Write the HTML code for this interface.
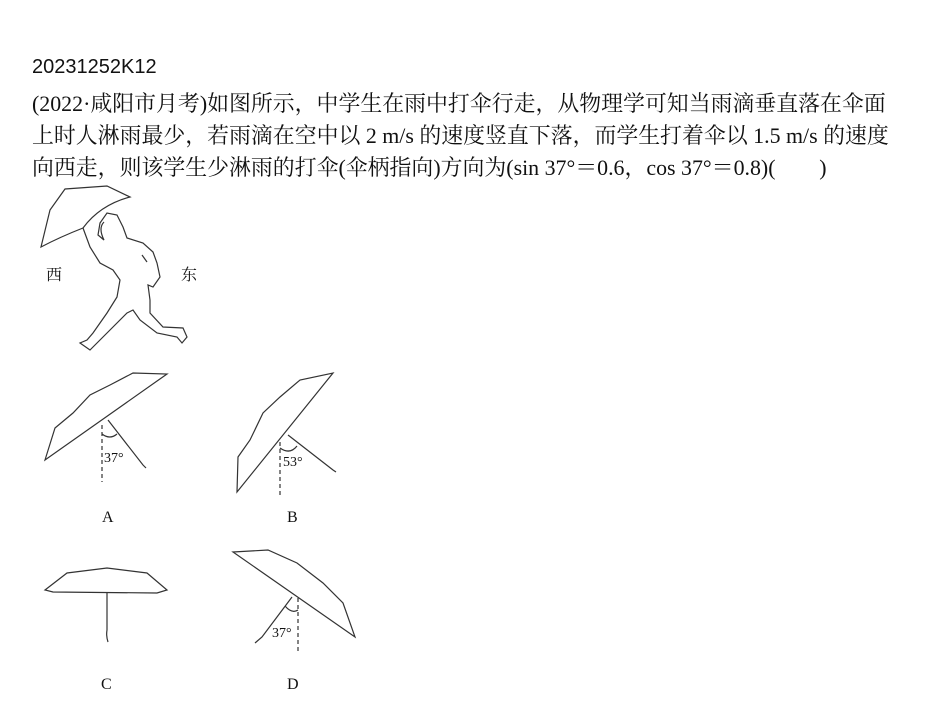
<!DOCTYPE html>
<html><head><meta charset="utf-8"><style>
body{margin:0;background:#fff;width:950px;height:710px;overflow:hidden;position:relative;}
.t{position:absolute;left:32px;white-space:nowrap;font-family:"Liberation Serif","Noto Serif CJK SC",serif;font-size:21.9px;color:#111;}
.id{position:absolute;left:32px;top:56px;font-family:"Liberation Sans","DejaVu Sans",sans-serif;font-size:20px;color:#111;}
svg{position:absolute;left:0;top:0;}
</style></head><body>
<div class="id">20231252K12</div>
<div class="t" style="top:87px">(2022·咸阳市月考)如图所示，中学生在雨中打伞行走，从物理学可知当雨滴垂直落在伞面</div>
<div class="t" style="top:119px">上时人淋雨最少，若雨滴在空中以 2 m/s 的速度竖直下落，而学生打着伞以 1.5 m/s 的速度</div>
<div class="t" style="top:151px">向西走，则该学生少淋雨的打伞(伞柄指向)方向为(sin 37°＝0.6，cos 37°＝0.8)(　　)</div>
<svg width="950" height="710" fill="none" stroke="#333" stroke-width="1.2" font-family="Liberation Serif,Noto Serif CJK SC,serif">
<path d="M41,247 L50,210 L65,189 L107,186 L130,197 Q100,205 83,228 Q60,237 41,247Z"/>
<path d="M83,228 L90,247 L100,263 L113,270 L120,280 L117,297 L107,313 L93,333 L87,340 L80,343 L90,350 L97,343 L110,330 L127,313 L133,310 L140,320 L157,333 L177,337 L182,343 L187,337 L183,328 L163,327 L150,313 L150,300 L148,285 L153,287 L160,277 L157,263 L153,252 L143,243 L127,238 L123,227 L117,215 L107,213 L100,223 L98,235 L104,240 Q98,228 104,222"/>
<path d="M142,255 l5,7"/>
<text x="46" y="280" font-size="16" fill="#111" stroke="none">西</text>
<text x="181" y="280" font-size="16" fill="#111" stroke="none">东</text>
<path d="M45,460 L55,428 L73,413 L90,395 L110,385 L133,373 L167,374 Z"/>
<path d="M108,420 L143,465 l3,3"/>
<path d="M102,425 L102,482" stroke-dasharray="4,3"/>
<path d="M102,434 Q110,440 117,434"/>
<text x="104" y="462" font-size="14" fill="#111" stroke="none">37°</text>
<text x="102" y="522" font-size="16" fill="#111" stroke="none">A</text>
<path d="M237,492 L238,457 L250,440 L263,413 L280,397 L300,380 L333,373 Z"/>
<path d="M288,435 L333,470 l3,2"/>
<path d="M280,442 L280,497" stroke-dasharray="4,3"/>
<path d="M280,448 Q290,455 297,446"/>
<text x="283" y="466" font-size="14" fill="#111" stroke="none">53°</text>
<text x="287" y="522" font-size="16" fill="#111" stroke="none">B</text>
<path d="M45,590 L67,573 L107,568 L147,573 L167,590 L157,593 L53,592 Z"/>
<path d="M107,593 L107,630 Q106,636 108,642"/>
<text x="101" y="689" font-size="16" fill="#111" stroke="none">C</text>
<path d="M233,552 L268,550 L297,563 L323,583 L343,603 L355,637 Z"/>
<path d="M292,597 L262,637 L255,643"/>
<path d="M298,598 L298,653" stroke-dasharray="4,3"/>
<path d="M285,606 Q292,614 298,610"/>
<text x="272" y="637" font-size="14" fill="#111" stroke="none">37°</text>
<text x="287" y="689" font-size="16" fill="#111" stroke="none">D</text>
</svg>
</body></html>
